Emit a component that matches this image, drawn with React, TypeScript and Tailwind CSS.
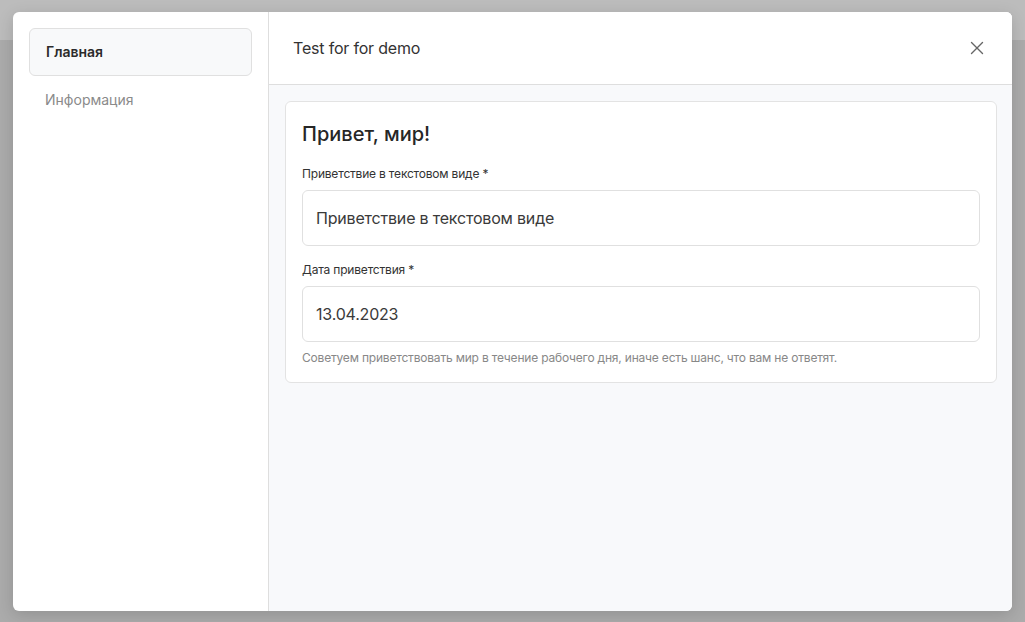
import { X } from 'lucide-react';

export default function App() {
  return (
    <div className="relative h-[622px] w-full overflow-hidden bg-[#ababab] tracking-[-0.012em]" style={{ fontFamily: 'Inter, "Noto Sans", sans-serif' }}>
      {/* page behind the overlay */}
      <div className="h-10 bg-[#bcbcbc]" />

      {/* modal */}
      <div className="absolute left-[13px] top-[12px] flex h-[599px] w-[999px] overflow-hidden rounded-md bg-white shadow-[0_4px_16px_rgba(0,0,0,0.15)]">
        {/* sidebar */}
        <div className="flex w-[256px] shrink-0 flex-col border-r border-[#dedede] p-4 tracking-normal">
          <div className="flex h-[48px] items-center rounded-md border border-[#e0e0e0] bg-[#f8f9fa] px-4 text-sm font-semibold text-[#2b2b2b]">
            Главная
          </div>
          <div className="flex h-[48px] items-center px-4 text-sm text-[#8a8a8a]">
            Информация
          </div>
        </div>

        {/* content */}
        <div className="flex min-w-0 flex-1 flex-col bg-[#f8f9fb]">
          <div className="flex h-[73px] shrink-0 items-center justify-between border-b border-[#dedede] bg-white pl-6 pr-6">
            <span className="text-base text-[#333]">Test for for demo</span>
            <X size={22} strokeWidth={1.5} className="text-[#666]" />
          </div>

          <div className="pb-4 pl-4 pr-[15px] pt-4">
            <div className="flex flex-col rounded-md border border-[#e3e3e3] bg-white p-4">
              <h2 className="text-xl leading-8 font-medium tracking-normal text-[#262626]">Привет, мир!</h2>

              <label className="mt-4 text-xs leading-4 text-[#333]">Приветствие в текстовом виде *</label>
              <div className="mt-2 flex h-[56px] items-center rounded-md border border-[#e0e0e0] px-[13px] text-base text-[#3a3a3a]">
                Приветствие в текстовом виде
              </div>

              <label className="mt-4 text-xs leading-4 text-[#333]">Дата приветствия *</label>
              <div className="mt-2 flex h-[56px] items-center rounded-md border border-[#e0e0e0] px-[13px] text-base text-[#3a3a3a]">
                13.04.2023
              </div>

              <p className="mt-2 text-xs leading-4 text-[#888]">
                Советуем приветствовать мир в течение рабочего дня, иначе есть шанс, что вам не ответят.
              </p>
            </div>
          </div>
        </div>
      </div>
    </div>
  );
}
